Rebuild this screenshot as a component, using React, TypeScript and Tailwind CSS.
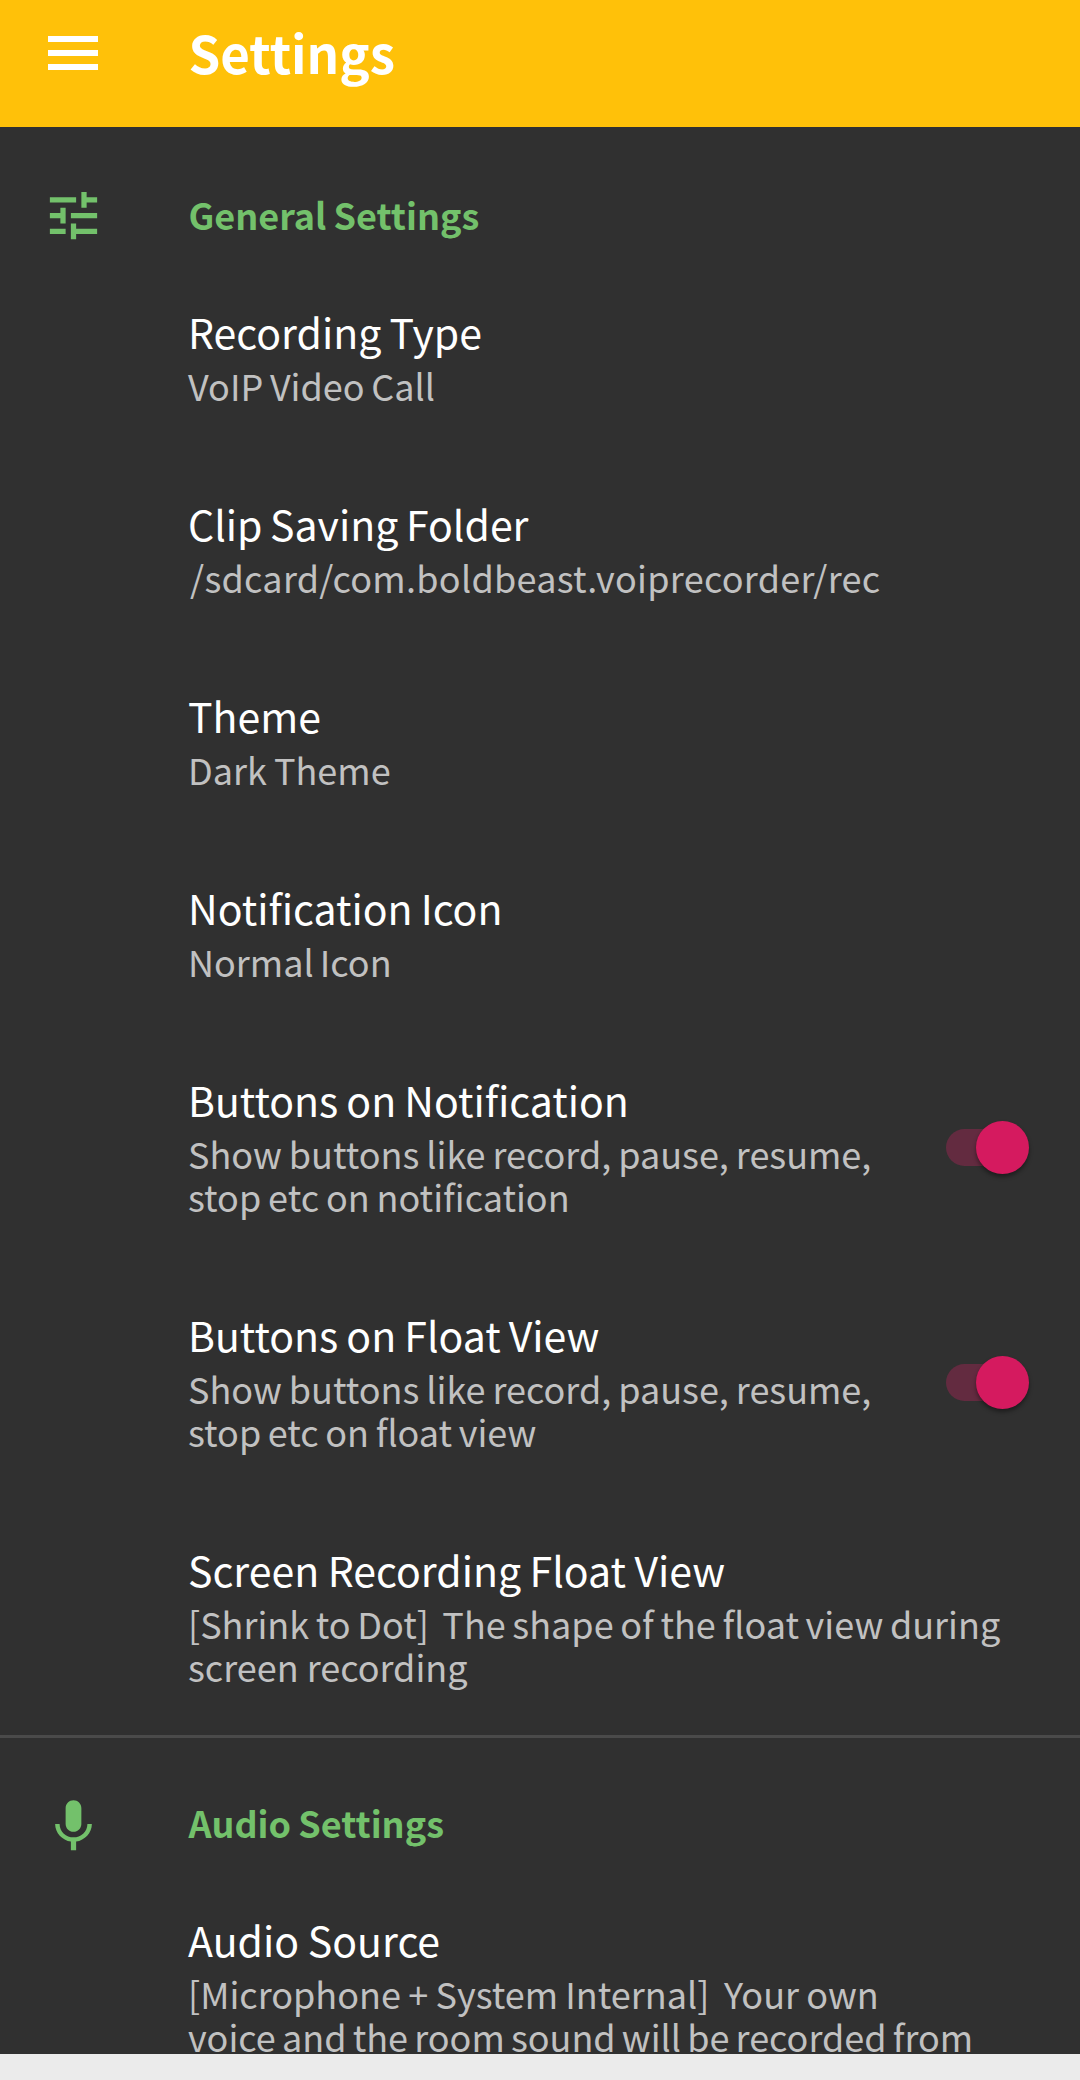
import React from "react";

type Line = { text: string; className?: string };

type Item = {
  title: string;
  titleClass?: string;
  lines: Line[];
  toggle?: boolean;
};

const generalItems: Item[] = [
  { title: "Recording Type", lines: [{ text: "VoIP Video Call", className: "[word-spacing:-1.4px]" }] },
  {
    title: "Clip Saving Folder",
    titleClass: "[word-spacing:-1.6px]",
    lines: [{ text: "/sdcard/com.boldbeast.voiprecorder/rec", className: "pl-[2px] tracking-[0.28px]" }],
  },
  { title: "Theme", lines: [{ text: "Dark Theme", className: "[word-spacing:-1px]" }] },
  { title: "Notification Icon", lines: [{ text: "Normal Icon", className: "[word-spacing:-1.9px]" }] },
  {
    title: "Buttons on Notification",
    lines: [
      { text: "Show buttons like record, pause, resume,", className: "[word-spacing:-1.1px]" },
      { text: "stop etc on notification", className: "[word-spacing:-1.2px]" },
    ],
    toggle: true,
  },
  {
    title: "Buttons on Float View",
    lines: [
      { text: "Show buttons like record, pause, resume,", className: "[word-spacing:-1.1px]" },
      { text: "stop etc on float view", className: "[word-spacing:-1.5px]" },
    ],
    toggle: true,
  },
  {
    title: "Screen Recording Float View",
    titleClass: "[word-spacing:-0.7px]",
    lines: [
      { text: "[Shrink to Dot]  The shape of the float view during", className: "[word-spacing:-1.4px]" },
      { text: "screen recording" },
    ],
  },
];

const audioItems: Item[] = [
  {
    title: "Audio Source",
    titleClass: "[word-spacing:-0.5px]",
    lines: [
      { text: "[Microphone + System Internal]  Your own", className: "[word-spacing:-0.8px]" },
      { text: "voice and the room sound will be recorded from", className: "[word-spacing:-1.9px]" },
    ],
  },
];

function TuneIcon() {
  return (
    <svg className="mt-[54px] size-[63px]" viewBox="0 0 24 24" fill="#73c16b">
      <path d="M3 17v2h6v-2H3zM3 5v2h10V5H3zm10 16v-2h8v-2h-8v-2h-2v6h2zM7 9v2H3v2h4v2h2V9H7zm14 4v-2H11v2h10zm-6-4h2V7h4V5h-4V3h-2v6z" />
    </svg>
  );
}

function MicIcon() {
  return (
    <svg className="mt-[57px] size-[63px]" viewBox="0 0 24 24" fill="#73c16b">
      <path d="M12 14c1.66 0 2.99-1.34 2.99-3L15 5c0-1.66-1.34-3-3-3S9 3.34 9 5v6c0 1.66 1.34 3 3 3zm5.3-3c0 3-2.54 5.1-5.3 5.1S6.7 14 6.7 11H5c0 3.41 2.72 6.23 6 6.72V21h2v-3.28c3.28-.48 6-3.3 6-6.72h-1.7z" />
    </svg>
  );
}

function Toggle() {
  return (
    <button
      role="switch"
      aria-checked="true"
      className="mt-px mr-[51px] flex h-[53px] w-[83px] shrink-0 items-center justify-end rounded-full"
    >
      <span className="-mr-[26px] h-[37px] w-[56px] shrink-0 rounded-l-full bg-[#632b40]" />
      <span className="z-10 size-[53px] shrink-0 rounded-full bg-[#d51a5f] shadow-[0_3px_4px_rgba(0,0,0,0.4)]" />
    </button>
  );
}

function SectionHeader({ icon, title }: { icon: React.ReactNode; title: string }) {
  return (
    <div className="flex h-[131px] items-start">
      <div className="w-[188.5px] shrink-0 pl-[42px]">{icon}</div>
      <h2 className="mt-[59px] text-[36px] leading-[50px] font-bold text-[#73c16b] [word-spacing:-1px]">
        {title}
      </h2>
    </div>
  );
}

function SettingRow({ item }: { item: Item }) {
  return (
    <li className="flex items-center justify-between pl-[188px]">
      <div className="shrink-0 pt-[45px] pb-[46px] whitespace-pre">
        <h3
          className={`text-[41px] leading-[50px] text-white ${
            item.titleClass ?? "[word-spacing:-1.1px]"
          }`}
        >
          {item.title}
        </h3>
        <div className="mt-2 text-[36px] leading-[43px] text-[#c1c1c1]">
          {item.lines.map((line) => (
            <p key={line.text} className={line.className}>
              {line.text}
            </p>
          ))}
        </div>
      </div>
      {item.toggle && <Toggle />}
    </li>
  );
}

export default function App() {
  return (
    <div className="flex h-[2080px] w-[1080px] flex-col overflow-hidden bg-[#303030] font-['Noto_Sans_CJK_SC',sans-serif]">
      <header className="flex h-[127px] shrink-0 items-start bg-[#ffc109]">
        <button className="flex w-[188.5px] shrink-0 flex-col gap-[8.5px] pt-[36px] pl-[48px]" aria-label="Menu">
          <span className="h-[5.5px] w-[50px] bg-white" />
          <span className="h-[5.5px] w-[50px] bg-white" />
          <span className="h-[5.5px] w-[50px] bg-white" />
        </button>
        <h1 className="mt-[17px] text-[51px] leading-[70px] font-bold text-white">Settings</h1>
      </header>
      <main className="min-h-0 flex-1 overflow-hidden">
        <section className="border-b-[3px] border-[#4a4a4a] pt-[3px] pb-px">
          <SectionHeader icon={<TuneIcon />} title="General Settings" />
          <ul>
            {generalItems.map((item) => (
              <SettingRow key={item.title} item={item} />
            ))}
          </ul>
        </section>
        <section>
          <SectionHeader icon={<MicIcon />} title="Audio Settings" />
          <ul>
            {audioItems.map((item) => (
              <SettingRow key={item.title} item={item} />
            ))}
          </ul>
        </section>
      </main>
      <footer className="h-[26px] shrink-0 bg-[#ebebeb]" />
    </div>
  );
}
